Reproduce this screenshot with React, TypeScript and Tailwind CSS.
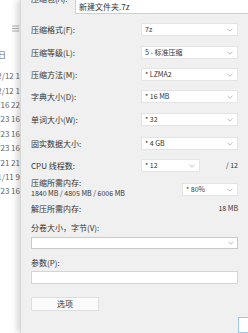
import React from "react";

const dates = [
  "2023/12/12 1",
  "2023/12/12 1",
  "2024/1/16 22",
  "2023/3/23 16",
  "2023/3/23 16",
  "2023/3/23 16",
  "2023/2/21 21",
  "2023/11/11 9",
  "2023/3/23 16",
];

function Chevron() {
  return (
    <svg width="6" height="4" viewBox="0 0 6 4" fill="none" stroke="#a8a8a8" strokeWidth="0.8">
      <polyline points="0.5 0.8 3 3.2 5.5 0.8" />
    </svg>
  );
}

function Select({ value, width }: { value: string; width: string }) {
  return (
    <div className={`${width} h-[13px] shrink-0 bg-white border border-[#e4e4e4] flex items-center justify-between pl-[3px] pr-[4px] text-[7px] text-[#333]`}>
      <span className="leading-none">{value}</span>
      <Chevron />
    </div>
  );
}

function Row({ label, value, mt }: { label: string; value: string; mt: string }) {
  return (
    <div className={`${mt} h-[13px] flex items-center justify-between`}>
      <span className="text-[8px] leading-none text-[#333]">{label}</span>
      <Select value={value} width="w-[97px]" />
    </div>
  );
}

export default function App() {
  return (
    <div className="relative w-[248px] h-[333px] overflow-hidden bg-white font-['Noto_Sans_CJK_SC',sans-serif]">
      {/* background explorer window */}
      <div className="flex flex-col text-[8px] text-[#666]">
        <div className="h-[25px]" />
        <svg width="20" height="8" viewBox="0 0 20 8" className="ml-[0px]">
          <line x1="12" y1="1" x2="19" y2="1" stroke="#9a9a9a" strokeWidth="0.8" />
          <line x1="12" y1="3.5" x2="19" y2="3.5" stroke="#9a9a9a" strokeWidth="0.8" />
          <line x1="12" y1="6" x2="19" y2="6" stroke="#9a9a9a" strokeWidth="0.8" />
        </svg>
        <div className="mt-[17px] w-[6px] h-[10px] flex justify-end whitespace-nowrap leading-[10px]">修改日</div>
        <div className="mt-[9px] flex flex-col">
          {dates.map((d, i) => (
            <div key={i} className="w-[20px] h-[14.4px] flex justify-end items-center whitespace-nowrap">
              {d}
            </div>
          ))}
        </div>
      </div>

      {/* compress dialog */}
      <div className="absolute left-[20px] top-0 w-[240px] h-[333px] bg-[#f0f0f0] border-l border-[#d8d8d8] shadow-[-3px_0_6px_rgba(0,0,0,0.16)] pl-[10px] pr-[22px] flex flex-col text-[#333]">
        <div className="flex items-start">
          <span className="w-[44px] shrink-0 -mt-[6px] text-[8px] leading-[10px]">压缩包(A):</span>
          <div className="flex-1 -mr-[40px] -mt-[1px] h-[15px] bg-white border border-[#d0d0d0] flex items-center pl-[3px] text-[8px]">
            新建文件夹.7z
          </div>
        </div>

        <Row mt="mt-[9px]" label="压缩格式(F):" value="7z" />
        <Row mt="mt-[10px]" label="压缩等级(L):" value="5 - 标准压缩" />
        <Row mt="mt-[9px]" label="压缩方法(M):" value="* LZMA2" />
        <Row mt="mt-[9px]" label="字典大小(D):" value="* 16 MB" />
        <Row mt="mt-[10px]" label="单词大小(W):" value="* 32" />
        <Row mt="mt-[11px]" label="固实数据大小:" value="* 4 GB" />

        <div className="mt-[9px] h-[13px] flex items-center">
          <span className="flex-1 text-[8px] leading-none">CPU 线程数:</span>
          <Select value="* 12" width="w-[59px]" />
          <span className="w-[38px] text-right text-[7px] leading-none">/ 12</span>
        </div>

        <div className="mt-[6px] flex items-start justify-between">
          <div className="flex flex-col">
            <span className="h-[10px] text-[8px] leading-[10px]">压缩所需内存:</span>
            <span className="h-[10px] text-[7px] leading-[10px] whitespace-nowrap">1840 MB / 4805 MB / 6006 MB</span>
          </div>
          <div className="mt-[5px]">
            <Select value="* 80%" width="w-[56px]" />
          </div>
        </div>

        <div className="mt-[6px] h-[10px] flex items-center justify-between">
          <span className="text-[8px] leading-none">解压所需内存:</span>
          <span className="text-[7px] leading-none">18 MB</span>
        </div>

        <span className="mt-[9px] h-[10px] text-[8px] leading-[10px]">分卷大小，字节(V):</span>
        <div className="mt-[4px] h-[12px] bg-white border border-[#c9c9c9] flex items-center justify-end pr-[3px]">
          <Chevron />
        </div>

        <span className="mt-[9px] h-[10px] text-[8px] leading-[10px]">参数(P):</span>
        <div className="mt-[3px] h-[14px] bg-white border border-[#d4d4d4]" />

        <button className="mt-[13px] w-[68px] h-[14px] bg-[#fbfbfb] border border-[#dedede] text-[8px] leading-none text-[#333]">
          选项
        </button>

        <div className="mt-[6px] -mr-[30px] flex justify-end">
          <div className="w-[30px] h-[16px] bg-white border border-[#9cc5ea]" />
        </div>
      </div>
    </div>
  );
}
